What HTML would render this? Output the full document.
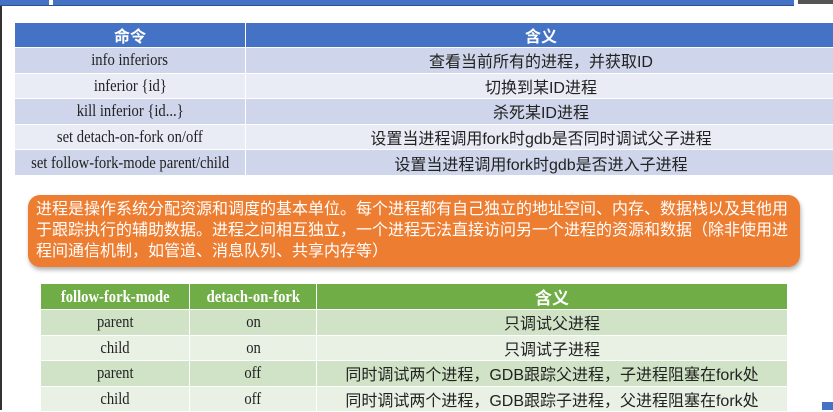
<!DOCTYPE html>
<html><head><meta charset="utf-8"><style>
*{margin:0;padding:0;box-sizing:border-box}
body{width:833px;height:410px;overflow:hidden;background:#fff;position:relative;font-family:"Liberation Serif","Noto Serif CJK SC",serif}
.abs{position:absolute}
table{border-collapse:collapse;position:absolute;table-layout:fixed}
td,th{text-align:center;color:#222;font-size:17px;border:1px solid #fff;white-space:nowrap;overflow:hidden;padding:0}
.c{display:flex;justify-content:center;white-space:nowrap}
.c span{display:inline-block;transform:scaleX(.86)}
.cjk{font-family:"Liberation Sans","Noto Sans CJK SC",sans-serif;font-size:16px}
#t1 th{background:#4472c4;color:#fff;font-family:"Liberation Sans","Noto Sans CJK SC",sans-serif;font-size:16px;font-weight:bold;height:24px}
#t1 tr:nth-child(even) td{background:#cfd5ea}
#t1 tr:nth-child(odd) td{background:#e9ebf5}
#t1 td{height:25.6px}
#t2 th{background:#70ad47;color:#fff;font-size:17px;font-weight:bold;height:24px}
#t2 tr:nth-child(even) td{background:#d0e3c6}
#t2 tr:nth-child(odd) td{background:#e9f1e5}
#t2 td{height:25.5px}
</style></head><body>
<div class="abs" style="left:0;top:0;width:794px;height:6px;background:#4472c4;border-bottom:1px solid #2f528f"></div>
<div class="abs" style="left:49px;top:0;width:4px;height:5px;background:#fff"></div>
<div class="abs" style="left:798px;top:0;width:35px;height:4px;background:#555"></div>
<div class="abs" style="left:0;top:6px;width:2px;height:404px;background:#333"></div>
<table id="t1" style="left:14px;top:22px;width:822px">
<colgroup><col style="width:231px"><col style="width:591px"></colgroup>
<tr><th>命令</th><th>含义</th></tr>
<tr><td><div class="c"><span>info inferiors</span></div></td><td class="cjk">查看当前所有的进程，并获取ID</td></tr>
<tr><td><div class="c"><span>inferior {id}</span></div></td><td class="cjk">切换到某ID进程</td></tr>
<tr><td><div class="c"><span>kill inferior {id...}</span></div></td><td class="cjk">杀死某ID进程</td></tr>
<tr><td><div class="c"><span>set detach-on-fork on/off</span></div></td><td class="cjk">设置当进程调用fork时gdb是否同时调试父子进程</td></tr>
<tr><td><div class="c"><span>set follow-fork-mode parent/child</span></div></td><td class="cjk">设置当进程调用fork时gdb是否进入子进程</td></tr>
</table>
<div class="abs" style="left:28px;top:195px;width:772px;height:72px;background:#ed7d31;border-radius:12px;box-shadow:1px 3px 4px rgba(0,0,0,.3);color:#fff;font-family:'Liberation Sans','Noto Sans CJK SC',sans-serif;font-size:16px;line-height:21px;padding:4px 0 0 8px">进程是操作系统分配资源和调度的基本单位。每个进程都有自己独立的地址空间、内存、数据栈以及其他用于跟踪执行的辅助数据。进程之间相互独立，一个进程无法直接访问另一个进程的资源和数据（除非使用进程间通信机制，如管道、消息队列、共享内存等）</div>
<table id="t2" style="left:40px;top:283px;width:747px">
<colgroup><col style="width:149px"><col style="width:127px"><col style="width:471px"></colgroup>
<tr><th><div class="c"><span>follow-fork-mode</span></div></th><th><div class="c"><span>detach-on-fork</span></div></th><th class="cjk">含义</th></tr>
<tr><td><div class="c"><span>parent</span></div></td><td><div class="c"><span>on</span></div></td><td class="cjk">只调试父进程</td></tr>
<tr><td><div class="c"><span>child</span></div></td><td><div class="c"><span>on</span></div></td><td class="cjk">只调试子进程</td></tr>
<tr><td><div class="c"><span>parent</span></div></td><td><div class="c"><span>off</span></div></td><td class="cjk">同时调试两个进程，GDB跟踪父进程，子进程阻塞在fork处</td></tr>
<tr><td><div class="c"><span>child</span></div></td><td><div class="c"><span>off</span></div></td><td class="cjk">同时调试两个进程，GDB跟踪子进程，父进程阻塞在fork处</td></tr>
</table>
<div class="abs" style="left:822px;top:402px;width:11px;height:8px;background:#4472c4"></div>
</body></html>
